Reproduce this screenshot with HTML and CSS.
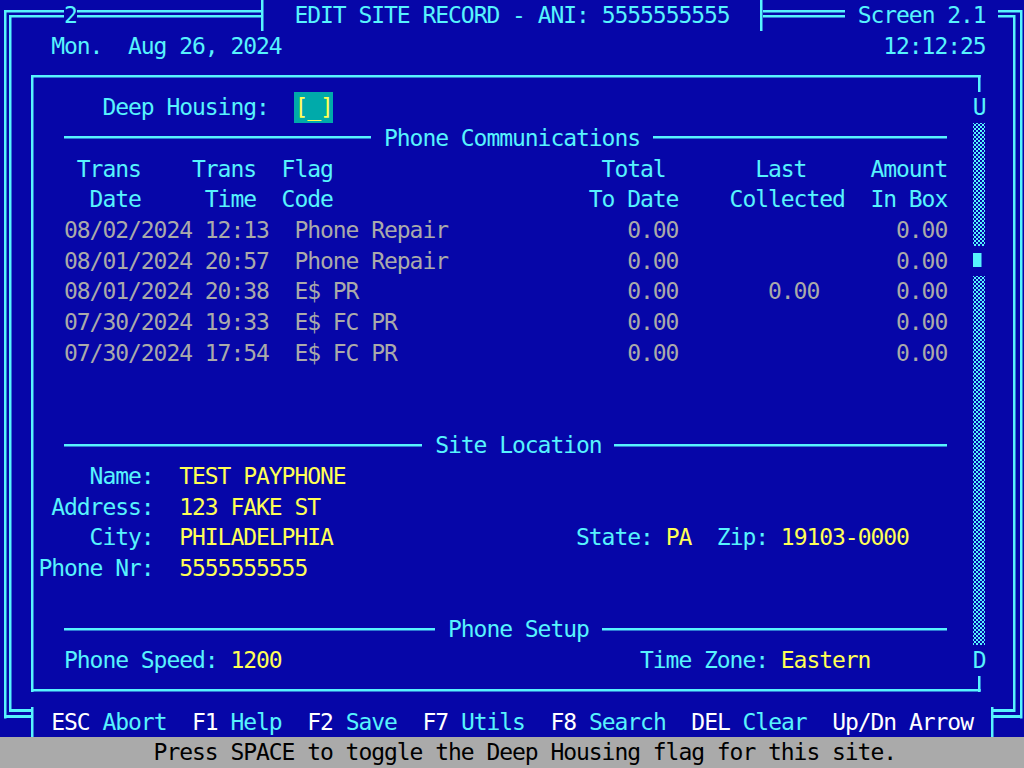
FILE: index.html
```html
<!DOCTYPE html>
<html lang="en">
<head>
<meta charset="utf-8">
<title>Edit Site Record</title>
<link rel="stylesheet" href="styles.css">
</head>
<body>
<div class="screen">
  <div class="row top"><span class="c-tl"> </span><span class="dl">    </span>2<span class="dl">              </span><span class="t-l"> </span>  EDIT SITE RECORD - ANI: 5555555555  <span class="t-r"> </span><span class="dl">      </span> Screen 2.1 <span class="dl"> </span><span class="c-tr"> </span></div>
  <div class="frame">
    <div class="row dateline"><span>Mon.  Aug 26, 2024</span><span>12:12:25</span></div>
    <div class="row box-top"></div>
    <div class="box-body">
      <div class="fields">
        <div class="row">        Deep Housing:  <span class="hl">[_]</span></div>
        <div class="row">     <span class="sl">                        </span> Phone Communications <span class="sl">                       </span></div>
        <div class="row">      Trans    Trans  Flag                     Total       Last     Amount</div>
        <div class="row">       Date     Time  Code                    To Date    Collected  In Box</div>
        <div class="row g">     08/02/2024 12:13  Phone Repair              0.00                 0.00</div>
        <div class="row g">     08/01/2024 20:57  Phone Repair              0.00                 0.00</div>
        <div class="row g">     08/01/2024 20:38  E$ PR                     0.00       0.00      0.00</div>
        <div class="row g">     07/30/2024 19:33  E$ FC PR                  0.00                 0.00</div>
        <div class="row g">     07/30/2024 17:54  E$ FC PR                  0.00                 0.00</div>
        <div class="row"></div>
        <div class="row"></div>
        <div class="row">     <span class="sl">                            </span> Site Location <span class="sl">                          </span></div>
        <div class="row">       Name:  <span class="y">TEST PAYPHONE</span></div>
        <div class="row">    Address:  <span class="y">123 FAKE ST</span></div>
        <div class="row">       City:  <span class="y">PHILADELPHIA</span>                   State: <span class="y">PA</span>  Zip: <span class="y">19103-0000</span></div>
        <div class="row">   Phone Nr:  <span class="y">5555555555</span></div>
        <div class="row"></div>
        <div class="row">     <span class="sl">                             </span> Phone Setup <span class="sl">                           </span></div>
        <div class="row">     Phone Speed: <span class="y">1200</span>                            Time Zone: <span class="y">Eastern</span></div>
      </div>
      <div class="scrollbar">
        <div class="sb-end">U</div>
        <div class="sb-track upper"></div>
        <div class="sb-thumb"></div>
        <div class="sb-track lower"></div>
        <div class="sb-end">D</div>
      </div>
    </div>
    <div class="row box-bottom"></div>
  </div>
  <div class="row bottom"><span class="c-bl"> </span><span class="dlb"> </span><span class="tb-l"> </span> <span class="w">ESC</span> Abort  <span class="w">F1</span> Help  <span class="w">F2</span> Save  <span class="w">F7</span> Utils  <span class="w">F8</span> Search  <span class="w">DEL</span> Clear  <span class="w">Up/Dn Arrow</span> <span class="tb-r"> </span><span class="dlb"> </span><span class="c-br"> </span></div>
  <div class="row status">            Press SPACE to toggle the Deep Housing flag for this site.</div>
</div>
</body>
</html>
```

FILE: styles.css
```css
:root {
  --cw: 12.8px;
  --rh: 30.72px;
  --blue: #0606a8;
  --cyan: #57f3fd;
  --gray: #aaaaaa;
  --yellow: #ffff55;
  --white: #ffffff;
  --teal: #00aaaa;
  --ln: linear-gradient(#57f3fd, #57f3fd);
}

html, body {
  margin: 0;
  padding: 0;
  background: var(--blue);
}

.screen {
  width: 1024px;
  height: 768px;
  overflow: hidden;
  font-family: "DejaVu Sans Mono", "Liberation Mono", monospace;
  font-size: 23px;
  letter-spacing: -1.0472px;
  color: var(--cyan);
  background: var(--blue);
}

.row {
  height: var(--rh);
  line-height: var(--rh);
  white-space: pre;
}

/* text colours */
.g { color: var(--gray); }
.y { color: var(--yellow); }
.w { color: var(--white); }

.hl {
  display: inline-block;
  height: var(--rh);
  vertical-align: top;
  background: var(--teal);
  color: var(--yellow);
}

/* line-drawing cells */
.dl, .dlb, .sl, .c-tl, .c-tr, .c-bl, .c-br, .t-l, .t-r, .tb-l, .tb-r {
  display: inline-block;
  height: var(--rh);
  vertical-align: top;
}

.dl {
  background:
    var(--ln) 0 10px / 100% 2.5px no-repeat,
    var(--ln) 0 14.5px / 100% 2.5px no-repeat;
}

.c-tl {
  background:
    var(--ln) 3.5px 10px / 100% 2.5px no-repeat,
    var(--ln) 8.5px 14.5px / 100% 2.5px no-repeat,
    var(--ln) 3.5px 10px / 2.5px 100% no-repeat,
    var(--ln) 8.5px 14.5px / 2.5px 100% no-repeat;
}

.c-tr {
  background:
    var(--ln) 0 10px / 10.8px 2.5px no-repeat,
    var(--ln) 0 14.5px / 4.3px 2.5px no-repeat,
    var(--ln) 8.3px 10px / 2.5px 100% no-repeat,
    var(--ln) 1.8px 14.5px / 2.5px 100% no-repeat;
}

.t-l {
  background:
    var(--ln) 0 10px / 5px 2.5px no-repeat,
    var(--ln) 0 14.5px / 5px 2.5px no-repeat,
    var(--ln) 5px 0 / 2.5px 100% no-repeat;
}

.t-r {
  background:
    var(--ln) 7.5px 10px / 100% 2.5px no-repeat,
    var(--ln) 7.5px 14.5px / 100% 2.5px no-repeat,
    var(--ln) 5px 0 / 2.5px 100% no-repeat;
}

.dlb {
  background:
    var(--ln) 0 2px / 100% 3px no-repeat,
    var(--ln) 0 8.5px / 100% 3px no-repeat;
}

.c-bl {
  background:
    var(--ln) 3.5px 0 / 2.5px 11.5px no-repeat,
    var(--ln) 3.5px 8.5px / 100% 3px no-repeat,
    var(--ln) 8.5px 0 / 2.5px 5px no-repeat,
    var(--ln) 8.5px 2px / 100% 3px no-repeat;
}

.c-br {
  background:
    var(--ln) 1.8px 0 / 2.5px 5px no-repeat,
    var(--ln) 0 2px / 4.3px 3px no-repeat,
    var(--ln) 8.3px 0 / 2.5px 11.5px no-repeat,
    var(--ln) 0 8.5px / 10.8px 3px no-repeat;
}

.tb-l {
  background:
    var(--ln) 0 2px / 5px 3px no-repeat,
    var(--ln) 0 8.5px / 5px 3px no-repeat,
    var(--ln) 5px 0 / 2.5px 100% no-repeat;
}

.tb-r {
  background:
    var(--ln) 7.5px 2px / 100% 3px no-repeat,
    var(--ln) 7.5px 8.5px / 100% 3px no-repeat,
    var(--ln) 5px 0 / 2.5px 100% no-repeat;
}

.sl {
  background: var(--ln) 0 13.5px / 100% 2.5px no-repeat;
}

/* outer double frame, rows 1-22 */
.frame {
  background:
    var(--ln) 3.5px 0 / 2.5px 100% no-repeat,
    var(--ln) 8.5px 0 / 2.5px 100% no-repeat,
    var(--ln) 1013px 0 / 2.5px 100% no-repeat,
    var(--ln) 1019.5px 0 / 2.5px 100% no-repeat;
}

.dateline {
  display: flex;
  justify-content: space-between;
  padding: 0 calc(3 * var(--cw)) 0 calc(4 * var(--cw));
}

/* inner single box */
.box-top {
  background:
    var(--ln) 30.6px 13.5px / 949.7px 2.5px no-repeat,
    var(--ln) 30.6px 13.5px / 2.5px 100% no-repeat,
    var(--ln) 977.8px 13.5px / 2.5px 100% no-repeat;
}

.box-bottom {
  background:
    var(--ln) 30.6px 13.5px / 949.7px 2.5px no-repeat,
    var(--ln) 30.6px 0 / 2.5px 16px no-repeat,
    var(--ln) 977.8px 0 / 2.5px 16px no-repeat;
}

.box-body {
  display: flex;
  background: var(--ln) 30.6px 0 / 2.5px 100% no-repeat;
}

.fields {
  width: calc(76 * var(--cw));
}

/* scroll indicator column */
.scrollbar {
  width: var(--cw);
  display: flex;
  flex-direction: column;
}

.sb-end {
  height: var(--rh);
  line-height: var(--rh);
  text-align: center;
}

.sb-track {
  margin: 0 0.5px 0 0.5px;
  background:
    radial-gradient(circle, var(--cyan) 0.9px, transparent 1.3px) 0 0 / 4px 4px,
    radial-gradient(circle, var(--cyan) 0.9px, transparent 1.3px) 2px 2px / 4px 4px;
}

.sb-track.upper { flex: 4; }
.sb-track.lower { flex: 12; }

.sb-thumb {
  height: var(--rh);
  background: var(--ln) 0.5px 7px / 8.5px 14px no-repeat;
}

/* status line */
.status {
  background: var(--gray);
  color: #000000;
}
```
